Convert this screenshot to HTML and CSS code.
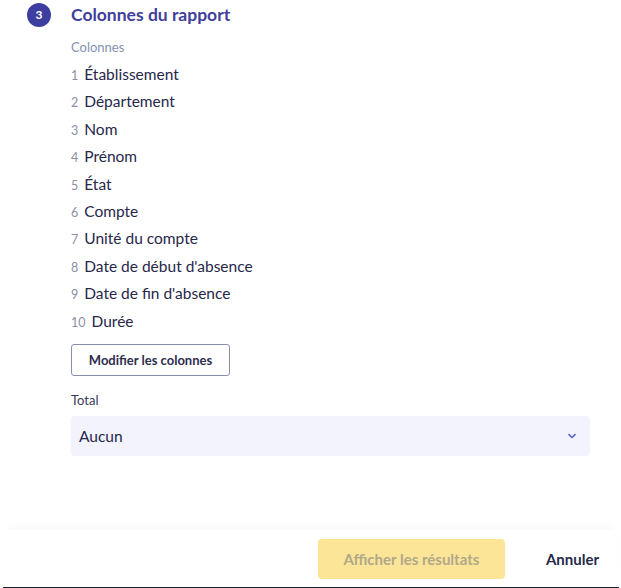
FILE: index.html
```html
<!DOCTYPE html>
<html lang="fr">
<head>
<meta charset="utf-8">
<link rel="stylesheet" href="styles.css">
</head>
<body>
<div class="page">
  <main class="content">
    <div class="step">
      <span class="step-badge">3</span>
      <h2 class="step-title">Colonnes du rapport</h2>
    </div>
    <div class="section">
      <div class="label">Colonnes</div>
      <ol class="cols">
        <li><span class="num">1</span><span class="name">Établissement</span></li>
        <li><span class="num">2</span><span class="name">Département</span></li>
        <li><span class="num">3</span><span class="name">Nom</span></li>
        <li><span class="num">4</span><span class="name">Prénom</span></li>
        <li><span class="num">5</span><span class="name">État</span></li>
        <li><span class="num">6</span><span class="name">Compte</span></li>
        <li><span class="num">7</span><span class="name">Unité du compte</span></li>
        <li><span class="num">8</span><span class="name">Date de début d'absence</span></li>
        <li><span class="num">9</span><span class="name">Date de fin d'absence</span></li>
        <li><span class="num">10</span><span class="name">Durée</span></li>
      </ol>
      <button class="btn-outline" type="button">Modifier les colonnes</button>
      <div class="label label-total">Total</div>
      <div class="select">
        <span>Aucun</span>
        <svg class="chev" width="10" height="6" viewBox="0 0 10 6"><path d="M1.5 1.2 L5 4.5 L8.5 1.2" fill="none" stroke="#5b5fc7" stroke-width="1.6"/></svg>
      </div>
    </div>
  </main>
  <footer class="footer">
    <button class="btn-primary" type="button">Afficher les résultats</button>
    <button class="btn-text" type="button">Annuler</button>
  </footer>
</div>
</body>
</html>
```

FILE: styles.css
```css
* { box-sizing: border-box; }
html, body { margin: 0; padding: 0; background: #fff; }
body {
  font-family: "Source Sans Pro", "Lato", "Noto Sans", sans-serif;
  color: #27274a;
  width: 621px;
  height: 588px;
  overflow: hidden;
}
.page {
  height: 588px;
  display: flex;
  flex-direction: column;
}
.content {
  flex: 1;
  padding: 2px 0 0 27px;
}
.step {
  display: flex;
  align-items: center;
  gap: 20px;
  height: 25px;
}
.step-badge {
  width: 24px;
  height: 24px;
  border-radius: 50%;
  background: #3d3e9f;
  color: #fff;
  font-size: 12px;
  font-weight: 700;
  display: flex;
  align-items: center;
  justify-content: center;
}
.step-title {
  margin: 0;
  font-size: 17.5px;
  font-weight: 700;
  color: #3f409b;
}
.section {
  padding-left: 44px;
  width: 563px;
}
.label {
  font-size: 13px;
  color: #8590b2;
  margin-top: 12px;
  height: 16px;
  line-height: 16px;
}
.label-total { color: #3a3a55; margin-top: 16px; }
.cols {
  list-style: none;
  margin: 6px 0 0;
  padding: 0;
}
.cols li {
  display: flex;
  align-items: baseline;
  gap: 6px;
  height: 27.4px;
  line-height: 27px;
}
.num { font-size: 12.5px; color: #8a8fa6; }
.name { font-size: 15.5px; color: #27274a; }
.btn-outline {
  margin-top: 9px;
  height: 32px;
  width: 159px;
  border: 1px solid #8990ad;
  border-radius: 3px;
  background: #fff;
  font-family: inherit;
  font-size: 13px;
  font-weight: 700;
  color: #2d2d4d;
}
.select {
  margin-top: 8px;
  height: 40px;
  background: #f3f3fe;
  border-radius: 4px;
  display: flex;
  align-items: center;
  justify-content: space-between;
  padding: 0 13px 0 8px;
  font-size: 15.5px;
  color: #27274a;
}
.chev { margin-top: 1px; }
.footer {
  height: 58px;
  border-bottom: 1px solid #1c2430;
  margin: 0 2px 0 3px;
  box-shadow: 0 -6px 10px -6px rgba(0,0,0,0.06);
  display: flex;
  align-items: center;
  justify-content: flex-end;
  gap: 41px;
  padding-right: 20px;
  padding-bottom: 0;
}
.btn-primary {
  height: 40px;
  width: 187px;
  border: none;
  border-radius: 4px;
  background: #fde597;
  color: #b0a88a;
  font-family: inherit;
  font-size: 15px;
  font-weight: 700;
}
.btn-text {
  border: none;
  background: none;
  padding: 0;
  font-family: inherit;
  font-size: 15px;
  font-weight: 700;
  color: #262a4a;
}
```
